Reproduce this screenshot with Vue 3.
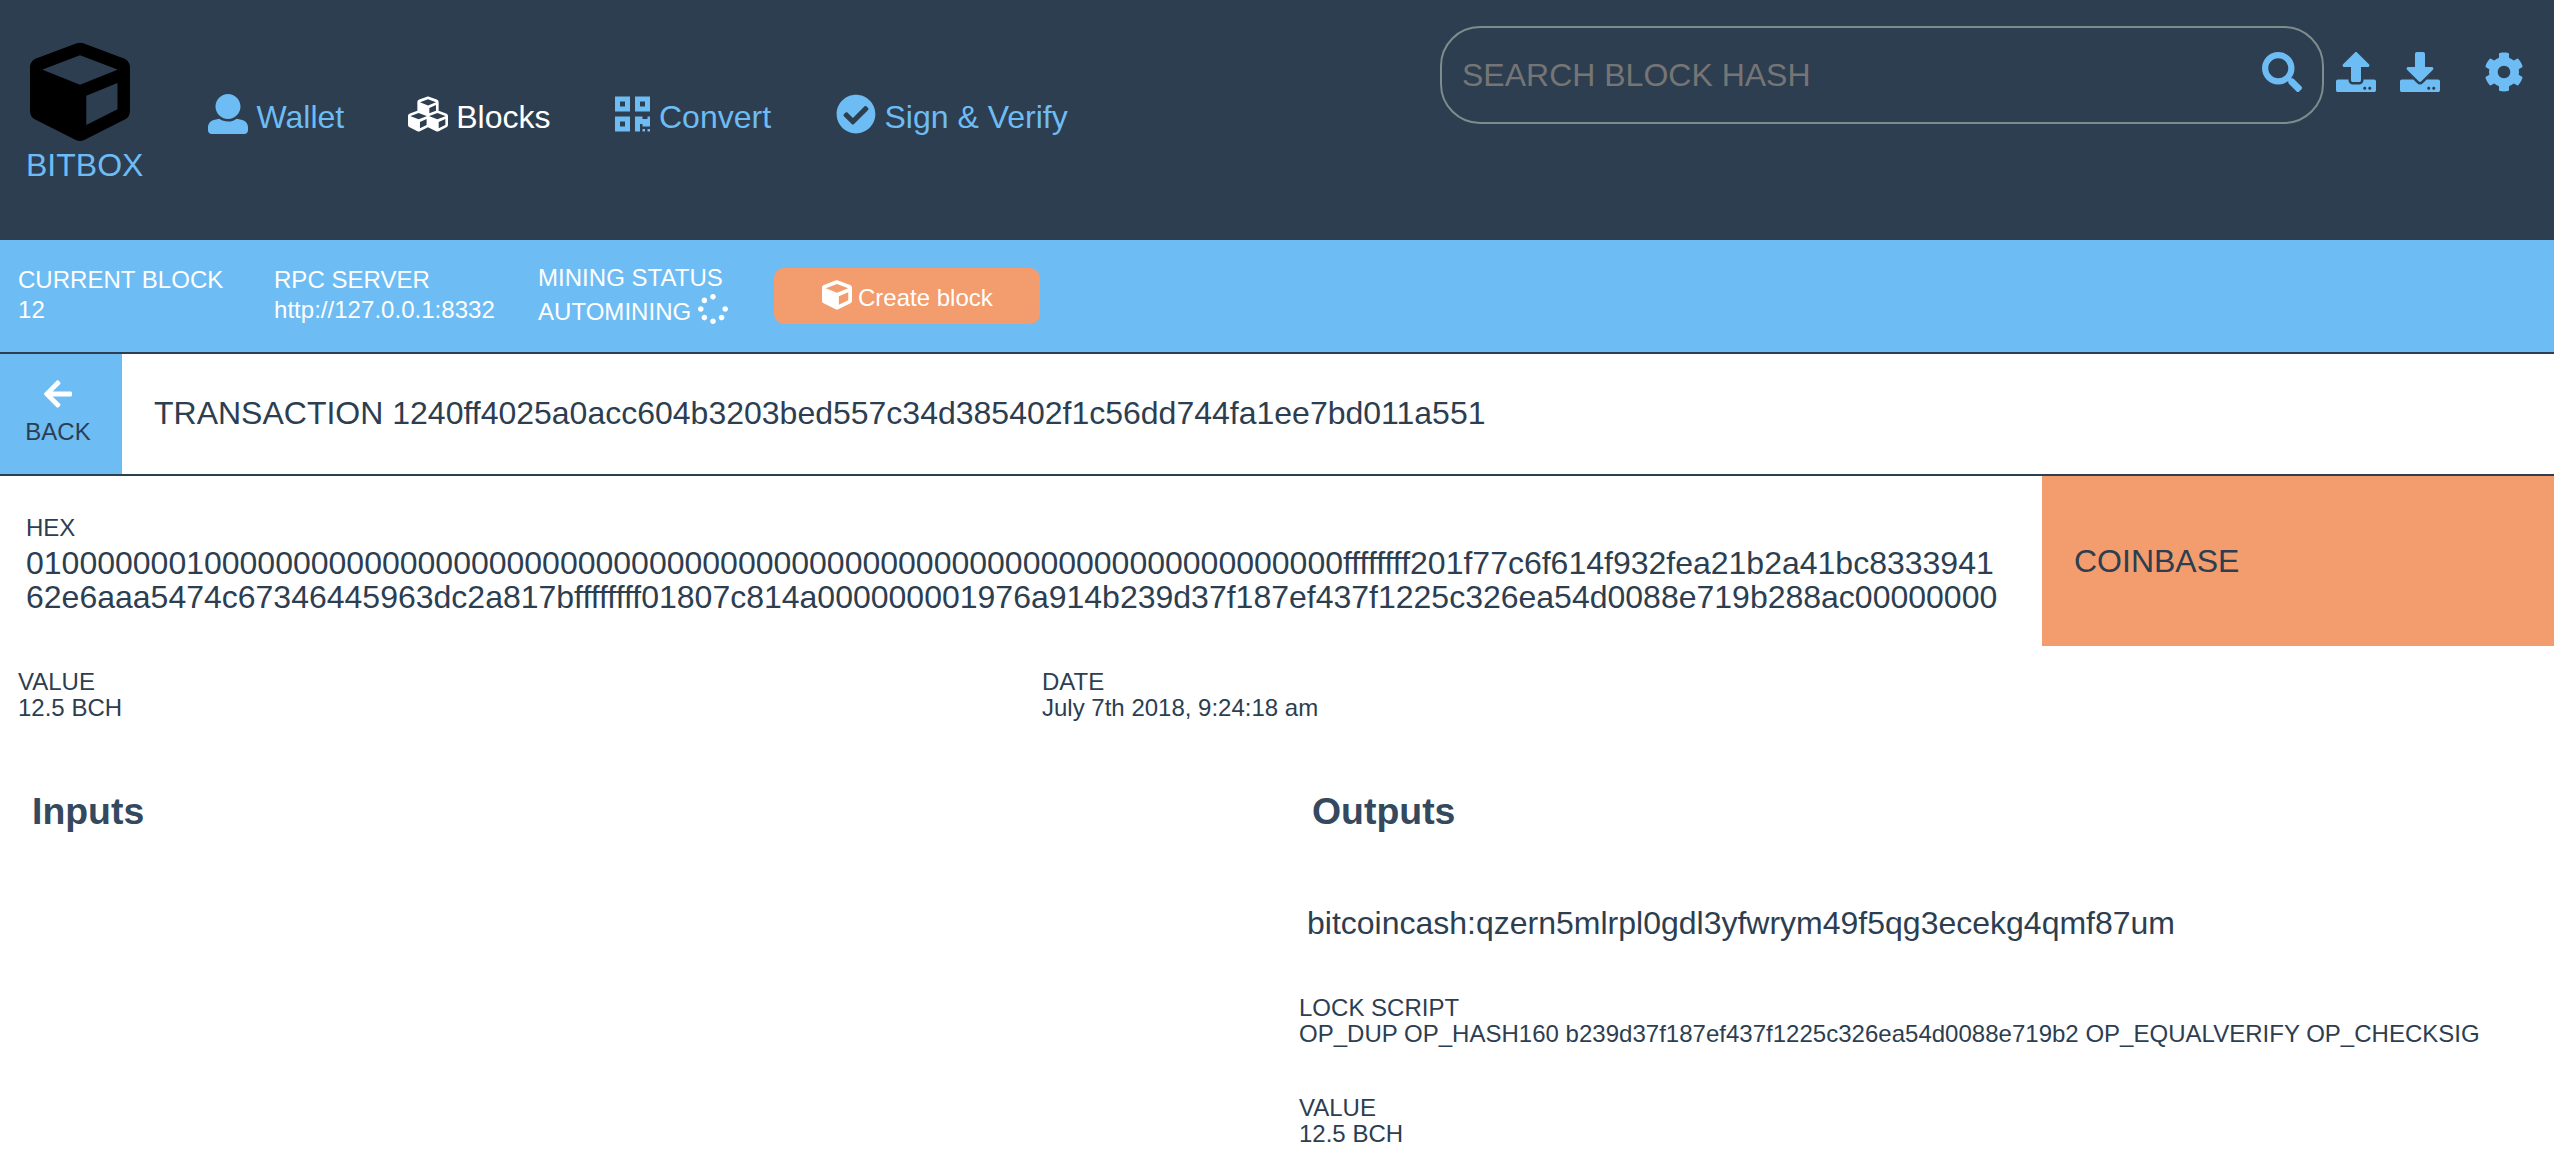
<script setup>
import { h } from 'vue'

const icons = {
  cube: [512, 'M239.1 6.3l-208 78c-18.7 7-31.1 25-31.1 45v225.1c0 18.2 10.3 34.8 26.5 42.9l208 104c13.5 6.8 29.4 6.8 42.9 0l208-104c16.3-8.1 26.5-24.8 26.5-42.9V129.3c0-20-12.4-37.9-31.1-44.9l-208-78C262 2.2 250 2.2 239.1 6.3zM256 68.4l192 72v1.1l-192 78-192-78v-1.1l192-72zm32 356V275.5l160-65v133.9l-160 80z'],
  user: [512, 'M256 0c88.366 0 160 71.634 160 160s-71.634 160-160 160S96 248.366 96 160 167.634 0 256 0zm183.283 333.821l-71.313-17.828c-74.923 53.89-165.738 41.864-223.94 0l-71.313 17.828C29.981 344.505 0 382.903 0 426.955V464c0 26.51 21.49 48 48 48h416c26.51 0 48-21.49 48-48v-37.045c0-44.052-29.981-82.45-72.717-93.134z'],
  cubes: [512, 'M488.6 250.2L392 214V105.5c0-15-9.3-28.4-23.4-33.7l-100-37.5c-8.1-3.1-17.1-3.1-25.3 0l-100 37.5c-14.1 5.3-23.4 18.7-23.4 33.7V214l-96.6 36.2C9.3 255.5 0 268.9 0 283.9V394c0 13.6 7.7 26.1 19.9 32.2l100 50c10.1 5.1 22.1 5.1 32.2 0l103.9-52 103.9 52c10.1 5.1 22.1 5.1 32.2 0l100-50c12.2-6.1 19.9-18.6 19.9-32.2V283.9c0-15-9.3-28.4-23.4-33.7zM358 214.8l-85 31.9v-68.2l85-37v73.3zM154 104.1l102-38.2 102 38.2v.6l-102 41.4-102-41.4v-.6zm84 291.1l-85 42.5v-79.1l85-38.8v75.4zm0-112l-102 41.4-102-41.4v-.6l102-38.2 102 38.2v.6zm240 112l-85 42.5v-79.1l85-38.8v75.4zm0-112l-102 41.4-102-41.4v-.6l102-38.2 102 38.2v.6z'],
  qrcode: [448, 'M0 224h192V32H0v192zM64 96h64v64H64V96zm192-64v192h192V32H256zm128 128h-64V96h64v64zM0 480h192V288H0v192zm64-128h64v64H64v-64zm352-64h32v128h-96v-32h-32v96h-64V288h96v32h64v-32zm0 160h32v32h-32v-32zm-64 0h32v32h-32v-32z'],
  check: [512, 'M504 256c0 136.967-111.033 248-248 248S8 392.967 8 256 119.033 8 256 8s248 111.033 248 248zM227.314 387.314l184-184c6.248-6.248 6.248-16.379 0-22.627l-22.627-22.627c-6.248-6.249-16.379-6.249-22.628 0L216 308.118l-70.059-70.059c-6.248-6.248-16.379-6.248-22.628 0l-22.627 22.627c-6.248 6.248-6.248 16.379 0 22.627l104 104c6.249 6.249 16.379 6.249 22.628.001z'],
  search: [512, 'M505 442.7L405.3 343c-4.5-4.5-10.6-7-17-7H372c27.6-35.3 44-79.7 44-128C416 93.1 322.9 0 208 0S0 93.1 0 208s93.1 208 208 208c48.3 0 92.7-16.4 128-44v16.3c0 6.4 2.5 12.5 7 17l99.7 99.7c9.4 9.4 24.6 9.4 33.9 0l28.3-28.3c9.4-9.4 9.4-24.6.1-34zM208 336c-70.7 0-128-57.2-128-128 0-70.7 57.2-128 128-128 70.7 0 128 57.2 128 128 0 70.7-57.2 128-128 128z'],
  upload: [512, 'M296 384h-80c-13.3 0-24-10.7-24-24V192h-87.7c-17.8 0-26.7-21.5-14.1-34.1L242.3 5.7c7.5-7.5 19.8-7.5 27.3 0l152.2 152.2c12.6 12.6 3.7 34.1-14.1 34.1H320v168c0 13.3-10.7 24-24 24zm216-8v112c0 13.3-10.7 24-24 24H24c-13.3 0-24-10.7-24-24V376c0-13.3 10.7-24 24-24h136v8c0 30.9 25.1 56 56 56h80c30.9 0 56-25.1 56-56v-8h136c13.3 0 24 10.7 24 24zm-124 88c0-11-9-20-20-20s-20 9-20 20 9 20 20 20 20-9 20-20zm64 0c0-11-9-20-20-20s-20 9-20 20 9 20 20 20 20-9 20-20z'],
  download: [512, 'M216 0h80c13.3 0 24 10.7 24 24v168h87.7c17.8 0 26.7 21.5 14.1 34.1L269.7 378.3c-7.5 7.5-19.8 7.5-27.3 0L90.1 226.1c-12.6-12.6-3.7-34.1 14.1-34.1H192V24c0-13.3 10.7-24 24-24zm296 376v112c0 13.3-10.7 24-24 24H24c-13.3 0-24-10.7-24-24V376c0-13.3 10.7-24 24-24h146.7l49 49c20.1 20.1 52.5 20.1 72.6 0l49-49H488c13.3 0 24 10.7 24 24zm-124 88c0-11-9-20-20-20s-20 9-20 20 9 20 20 20 20-9 20-20zm64 0c0-11-9-20-20-20s-20 9-20 20 9 20 20 20 20-9 20-20z'],
  cog: [512, 'M444.788 291.1l42.616 24.599c4.867 2.809 7.126 8.618 5.459 13.985-11.07 35.642-29.97 67.842-54.689 94.586a12.016 12.016 0 0 1-14.832 2.254l-42.584-24.595a191.577 191.577 0 0 1-60.759 35.13v49.182a12.01 12.01 0 0 1-9.377 11.718c-34.956 7.85-72.499 8.256-109.219.007-5.49-1.233-9.403-6.096-9.403-11.723v-49.184a191.555 191.555 0 0 1-60.759-35.13l-42.584 24.595a12.016 12.016 0 0 1-14.832-2.254c-24.718-26.744-43.619-58.944-54.689-94.586-1.667-5.366.592-11.175 5.459-13.985L67.212 291.1a193.48 193.48 0 0 1 0-70.199l-42.616-24.599c-4.867-2.809-7.126-8.618-5.459-13.985 11.07-35.642 29.97-67.842 54.689-94.586a12.016 12.016 0 0 1 14.832-2.254l42.584 24.595a191.577 191.577 0 0 1 60.759-35.13V25.759a12.01 12.01 0 0 1 9.377-11.718c34.956-7.85 72.499-8.256 109.219-.007 5.49 1.233 9.403 6.096 9.403 11.723v49.184a191.555 191.555 0 0 1 60.759 35.13l42.584-24.595a12.016 12.016 0 0 1 14.832 2.254c24.718 26.744 43.619 58.944 54.689 94.586 1.667 5.366-.592 11.175-5.459 13.985L444.788 220.9a193.485 193.485 0 0 1 0 70.2zM336 256c0-44.112-35.888-80-80-80s-80 35.888-80 80 35.888 80 80 80 80-35.888 80-80z'],
  arrow: [448, 'M257.5 445.1l-22.2 22.2c-9.4 9.4-24.6 9.4-33.9 0L7 273c-9.4-9.4-9.4-24.6 0-33.9L201.4 44.7c9.4-9.4 24.6-9.4 33.9 0l22.2 22.2c9.5 9.5 9.3 25-.4 34.3L136.6 216H424c13.3 0 24 10.7 24 24v32c0 13.3-10.7 24-24 24H136.6l120.5 114.8c9.8 9.3 10 24.8.4 34.3z'],
  spinner: [512, 'M304 48c0 26.51-21.49 48-48 48s-48-21.49-48-48 21.49-48 48-48 48 21.49 48 48zm-48 368c-26.51 0-48 21.49-48 48s21.49 48 48 48 48-21.49 48-48-21.49-48-48-48zm208-208c-26.51 0-48 21.49-48 48s21.49 48 48 48 48-21.49 48-48-21.49-48-48-48zM96 256c0-26.51-21.49-48-48-48S0 229.49 0 256s21.49 48 48 48 48-21.49 48-48zm12.922 99.078c-26.51 0-48 21.49-48 48s21.49 48 48 48 48-21.49 48-48c0-26.509-21.491-48-48-48zm294.156 0c-26.51 0-48 21.49-48 48s21.49 48 48 48 48-21.49 48-48c0-26.509-21.49-48-48-48zM108.922 60.922c-26.51 0-48 21.49-48 48s21.49 48 48 48 48-21.49 48-48-21.491-48-48-48z'],
}

const Icon = ({ name }) =>
  h('svg', { viewBox: `0 0 ${icons[name][0]} 512`, fill: 'currentColor' }, [
    h('path', { d: icons[name][1] }),
  ])
Icon.props = ['name']

const nav = [
  { icon: 'user', label: 'Wallet' },
  { icon: 'cubes', label: 'Blocks', active: true },
  { icon: 'qrcode', label: 'Convert' },
  { icon: 'check', label: 'Sign & Verify' },
]

const txid = '1240ff4025a0acc604b3203bed557c34d385402f1c56dd744fa1ee7bd011a551'
const rawHex =
  '01000000010000000000000000000000000000000000000000000000000000000000000000ffffffff201f77c6f614f932fea21b2a41bc833394162e6aaa5474c67346445963dc2a817bffffffff01807c814a000000001976a914b239d37f187ef437f1225c326ea54d0088e719b288ac00000000'
</script>

<template>
  <div class="app">
    <header class="header">
      <a class="logo">
        <Icon name="cube" class="logo-mark" />
        <span class="logo-name">BITBOX</span>
      </a>
      <nav class="nav">
        <a v-for="n in nav" :key="n.label" class="nav-item" :class="{ active: n.active }">
          <Icon :name="n.icon" :class="['nav-icon', n.icon]" />
          <span class="nav-label">{{ n.label }}</span>
        </a>
      </nav>
      <div class="tools">
        <div class="search">
          <span class="placeholder">SEARCH BLOCK HASH</span>
          <Icon name="search" class="tool" />
        </div>
        <Icon name="upload" class="tool upload" />
        <Icon name="download" class="tool download" />
        <Icon name="cog" class="tool cog" />
      </div>
    </header>

    <section class="status">
      <div class="stat current">
        <div>CURRENT BLOCK</div>
        <div>12</div>
      </div>
      <div class="stat server">
        <div>RPC SERVER</div>
        <div>http://127.0.0.1:8332</div>
      </div>
      <div class="stat mining">
        <div>MINING STATUS</div>
        <div class="mining-row">
          <span class="mining-text">AUTOMINING</span>
          <Icon name="spinner" class="small-icon" />
        </div>
      </div>
      <button class="create">
        <Icon name="cube" class="small-icon" />
        <span class="create-text">Create block</span>
      </button>
    </section>

    <section class="title-bar">
      <a class="back">
        <Icon name="arrow" class="back-icon" />
        <span>BACK</span>
      </a>
      <h1 class="title">TRANSACTION {{ txid }}</h1>
    </section>

    <section class="raw">
      <div class="raw-hex">
        <div class="raw-label">HEX</div>
        <div class="raw-value">{{ rawHex }}</div>
      </div>
      <div class="coinbase">COINBASE</div>
    </section>

    <section class="facts">
      <div class="fact first">
        <div>VALUE</div>
        <div>12.5 BCH</div>
      </div>
      <div class="fact">
        <div>DATE</div>
        <div>July 7th 2018, 9:24:18 am</div>
      </div>
    </section>

    <section class="io">
      <div class="inputs">
        <h3>Inputs</h3>
      </div>
      <div class="outputs">
        <h3>Outputs</h3>
        <div class="address">bitcoincash:qzern5mlrpl0gdl3yfwrym49f5qg3ecekg4qmf87um</div>
        <div class="detail script">
          <div>LOCK SCRIPT</div>
          <div>OP_DUP OP_HASH160 b239d37f187ef437f1225c326ea54d0088e719b2 OP_EQUALVERIFY OP_CHECKSIG</div>
        </div>
        <div class="detail">
          <div>VALUE</div>
          <div>12.5 BCH</div>
        </div>
      </div>
    </section>
  </div>
</template>

<style>
body {
  background: #fff;
}
</style>

<style scoped>
.app {
  width: 2554px;
  height: 1168px;
  overflow: hidden;
  font-family: "Liberation Sans", Arial, sans-serif;
  font-size: 32px;
  color: #2c3e50;
}
.app svg {
  display: block;
  flex: none;
}
.header {
  display: flex;
  align-items: flex-start;
  height: 240px;
  box-sizing: border-box;
  padding-right: 30px;
  background: #2d3e50;
  color: #6ebcf4;
}
.logo {
  display: flex;
  flex-direction: column;
  width: 118px;
  padding: 42px 0 0 26px;
}
.logo-mark {
  width: 100px;
  height: 100px;
  margin-left: 4px;
  color: #000;
}
.logo-name {
  margin-top: 5px;
  line-height: 36px;
}
.nav {
  display: flex;
  gap: 65px;
  padding: 94px 0 0 64px;
}
.nav-item {
  display: flex;
  gap: 8.5px;
}
.nav-item:first-child {
  margin-right: -1.5px;
}
.nav-item.active {
  color: #fff;
}
.nav-icon {
  width: 40px;
  height: 40px;
}
.nav-icon.qrcode {
  width: 35px;
}
.nav-label {
  padding-top: 3px;
  line-height: 40px;
  white-space: nowrap;
}
.tools {
  display: flex;
  align-items: flex-start;
  margin-left: auto;
  padding-top: 26px;
}
.search {
  display: flex;
  align-items: flex-start;
  justify-content: space-between;
  box-sizing: border-box;
  width: 884px;
  height: 98px;
  padding: 24px 20px 0 20px;
  border: 2px solid #7f8c8d;
  border-radius: 40px;
}
.placeholder {
  line-height: 46px;
  color: #757575;
}
.tool {
  width: 40px;
  height: 40px;
}
.upload {
  margin: 26px 0 0 12px;
}
.download {
  margin: 26px 0 0 24px;
}
.cog {
  margin: 26px 0 0 44px;
}
.status {
  display: flex;
  align-items: flex-start;
  box-sizing: border-box;
  height: 114px;
  padding: 23px 0 0 18px;
  border-bottom: 2px solid #2c3e50;
  background: #6ebcf4;
  color: #fff;
  font-size: 24px;
  line-height: 30px;
  letter-spacing: 0.03px;
  white-space: nowrap;
}
.stat {
  padding-top: 2px;
}
.current {
  width: 256px;
}
.server {
  width: 264px;
}
.mining {
  width: 236px;
  padding-top: 0;
}
.mining-row {
  display: flex;
  gap: 7px;
  padding-top: 1px;
}
.mining-text {
  padding-top: 3px;
}
.small-icon {
  width: 30px;
  height: 30px;
}
.create {
  display: flex;
  box-sizing: border-box;
  width: 266px;
  height: 56px;
  margin: 5px 0 0;
  padding: 12px 0 0 48px;
  gap: 6px;
  border: 0;
  border-radius: 10px;
  background: #f39c6d;
  color: #fff;
  font: 24px/30px "Liberation Sans", Arial, sans-serif;
}
.create-text {
  padding-top: 3px;
}
.title-bar {
  display: flex;
  box-sizing: border-box;
  height: 122px;
  border-bottom: 2px solid #2c3e50;
}
.back {
  display: flex;
  flex-direction: column;
  align-items: center;
  box-sizing: border-box;
  width: 122px;
  padding: 24px 6px 0 0;
  background: #6ebcf4;
  font-size: 24px;
  line-height: 30px;
}
.back-icon {
  width: 28px;
  height: 32px;
  margin-bottom: 7px;
  color: #fff;
}
.title {
  margin: 0;
  padding: 41px 0 0 32px;
  font-size: 32px;
  font-weight: normal;
  line-height: 36px;
}
.raw {
  display: flex;
  height: 170px;
}
.raw-hex {
  box-sizing: border-box;
  width: 2042px;
  padding: 37px 40px 0 26px;
}
.raw-label {
  font-size: 24px;
  line-height: 30px;
}
.raw-value {
  margin-top: 3px;
  line-height: 34px;
  word-break: break-all;
}
.coinbase {
  flex: 1;
  padding: 67px 0 0 32px;
  background: #f39c6d;
  line-height: 36px;
}
.facts {
  display: flex;
  padding-top: 23px;
  font-size: 24px;
  line-height: 26px;
}
.first {
  width: 1024px;
}
.fact:first-child {
  padding-left: 18px;
}
.io {
  display: flex;
  padding-top: 69px;
}
.inputs {
  width: 1267px;
  padding-left: 32px;
}
h3 {
  margin: 0;
  font-size: 37.44px;
  line-height: 42px;
  color: #34495e;
}
.outputs h3 {
  padding-left: 13px;
}
.address {
  margin-top: 73px;
  padding-left: 8px;
  line-height: 36px;
}
.detail {
  margin-top: 48px;
  font-size: 24px;
  line-height: 26px;
}
.detail.script {
  margin-top: 54px;
  letter-spacing: 0.015px;
}
</style>
